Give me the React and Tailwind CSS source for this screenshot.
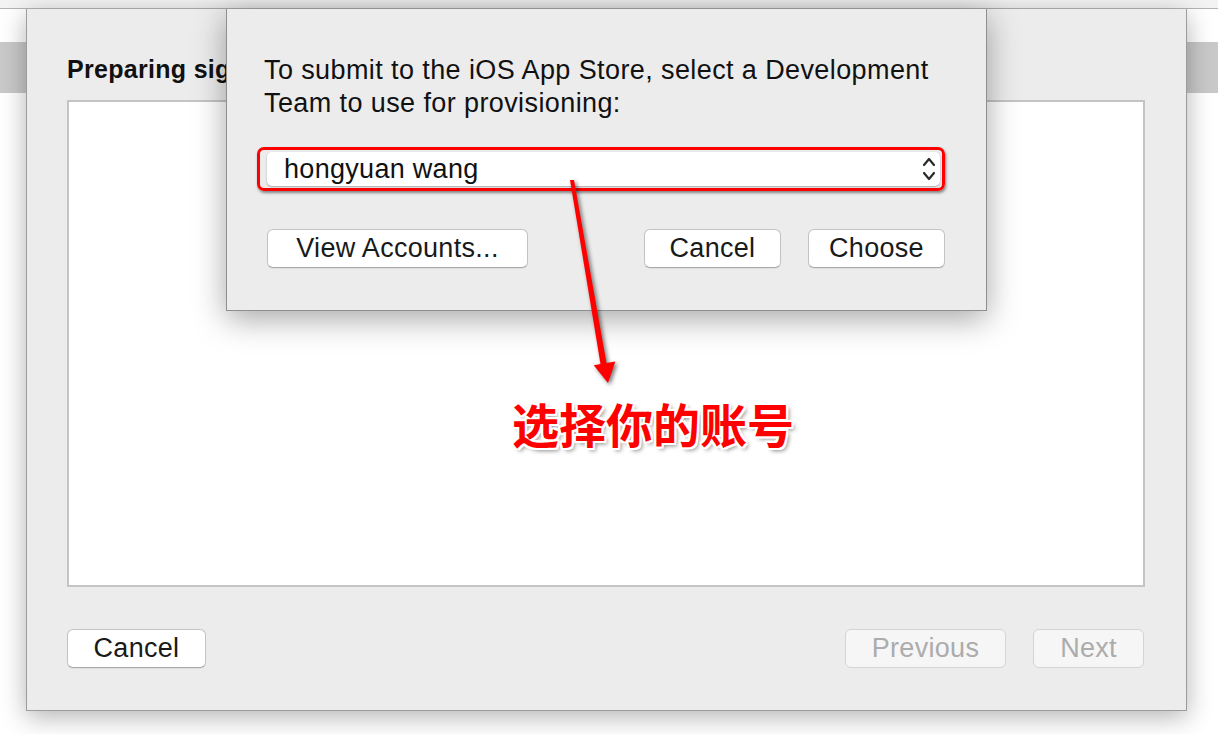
import React from 'react';

// macOS-style sheet buttons
const Btn = ({ children, className = '', disabled = false }) => (
  <div
    className={`h-[39px] flex items-center justify-center rounded-[6px] border text-[27px] leading-none tracking-[0.3px] ${
      disabled
        ? 'bg-[#f6f6f6] border-[#d4d4d4] text-[#acacac]'
        : 'bg-white border-[#c3c3c3] border-b-[#aaaaaa] text-[#1a1a1a] shadow-[0_1px_0_rgba(0,0,0,0.06)]'
    } ${className}`}
  >
    {children}
  </div>
);

const Chevrons = () => (
  <svg width="14" height="28" viewBox="0 0 14 28" fill="none" stroke="#2a2a2a" strokeWidth="2.2" strokeLinecap="round" strokeLinejoin="round">
    <polyline points="2,10 7,4 12,10" />
    <polyline points="2,18 7,24 12,18" />
  </svg>
);

export default function App() {
  return (
    <div className="relative w-[1218px] h-[734px] bg-white overflow-hidden font-['Liberation_Sans','Noto_Sans_CJK_SC',sans-serif]">
      {/* window behind the sheets */}
      <div className="h-[9px] bg-[#f3f3f3] border-b border-[#b4b4b4]" />
      <div className="mt-[33px] h-[51px] bg-[#c9c9c9]" />

      {/* main sheet */}
      <div className="absolute left-[26px] top-[9px] w-[1161px] h-[702px] bg-[#ececec] border-x border-b border-[#9c9c9c] shadow-[0_6px_24px_rgba(0,0,0,0.3)] pl-[40px] pr-[42px] pt-[45px] flex flex-col">
        {/* title runs under the team sheet; only the start shows */}
        <div className="w-[159px] overflow-hidden whitespace-nowrap text-[25px] leading-[30px] font-bold text-[#111] tracking-[0.3px]">
          Preparing signing identities...
        </div>
        <div className="mt-[16px] w-[1078px] h-[487px] bg-white border-2 border-[#c4c4c4]" />
        <div className="mt-[42px] flex items-start">
          <Btn className="w-[139px]">Cancel</Btn>
          <Btn disabled className="ml-auto w-[161px]">Previous</Btn>
          <Btn disabled className="ml-[27px] w-[111px]">Next</Btn>
        </div>
      </div>

      {/* team selection sheet */}
      <div className="absolute left-[226px] top-[9px] w-[761px] h-[302px] bg-[#ececec] border-x border-b border-[#8f8f8f] shadow-[0_8px_30px_rgba(0,0,0,0.35)] pt-[45px] flex flex-col">
        <p className="pl-[37px] text-[27px] leading-[33px] tracking-[0.4px] text-[#111]">
          To submit to the iOS App Store, select a Development
          <br />
          Team to use for provisioning:
        </p>
        <div className="mt-[27px] ml-[30px] w-[688px] h-[44px] rounded-[7px] border-[3px] border-[#ff0000] shadow-[1px_2px_3px_rgba(0,0,0,0.45)] pl-[7px] pr-[2px] py-[2px]">
          <div className="h-full bg-white rounded-[5px] shadow-[0_1px_2px_rgba(0,0,0,0.3)] flex items-center pl-[17px] pr-[4px]">
            <span className="text-[27px] leading-none tracking-[0.3px] text-[#111]">hongyuan wang</span>
            <span className="ml-auto flex items-center">
              <Chevrons />
            </span>
          </div>
        </div>
        <div className="mt-[38px] ml-[40px] w-[678px] flex items-start">
          <Btn className="w-[261px]">View Accounts...</Btn>
          <Btn className="ml-auto w-[137px]">Cancel</Btn>
          <Btn className="ml-[27px] w-[137px]">Choose</Btn>
        </div>
      </div>

      {/* annotation arrow */}
      <svg
        className="absolute left-0 top-0 pointer-events-none [filter:drop-shadow(2px_2px_2px_rgba(0,0,0,0.55))]"
        width="1218"
        height="734"
        viewBox="0 0 1218 734"
      >
        <polygon points="570,180 574,180 607,366 601,367" fill="#ff0000" />
        <polygon points="593.7,365.2 615.3,361.4 608,383" fill="#ff0000" />
      </svg>

      {/* annotation label */}
      <div className="absolute left-[512px] top-[399px] text-[47px] leading-none font-bold text-[#ff0000] font-['Noto_Sans_CJK_SC',sans-serif] [text-shadow:2px_0_0_#fff,-2px_0_0_#fff,0_2px_0_#fff,0_-2px_0_#fff,2px_2px_0_#fff,-2px_-2px_0_#fff,2px_-2px_0_#fff,-2px_2px_0_#fff,3px_3px_4px_rgba(0,0,0,0.45)]">
        选择你的账号
      </div>
    </div>
  );
}
